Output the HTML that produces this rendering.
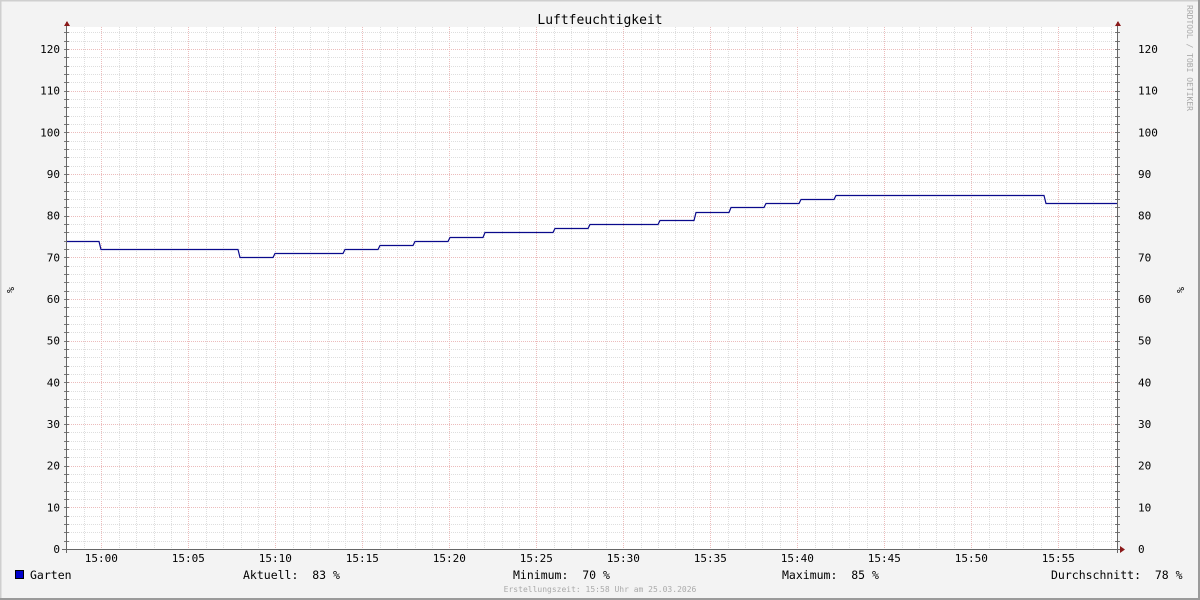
<!DOCTYPE html>
<html><head><meta charset="utf-8"><style>
html,body{margin:0;padding:0;background:#f3f3f3}
svg{display:block}
text{font-family:"DejaVu Sans Mono","Liberation Mono",monospace}
</style></head><body>
<svg id="g" width="1200" height="600" xmlns="http://www.w3.org/2000/svg">
<rect x="0" y="0" width="1200" height="600" fill="#f3f3f3"/>
<path d="M0 0.5H1200M0.5 0V600" stroke="#cfcfcf" stroke-width="2"/>
<path d="M0 599H1200M1199 0V600" stroke="#9a9a9a" stroke-width="2"/>
<rect x="67" y="27" width="1050" height="522" fill="#fff"/>
<g id="grid"></g>
<text x="600" y="24" font-size="13" text-anchor="middle" fill="#000">Luftfeuchtigkeit</text>
<g id="lbl" font-size="11" fill="#000"></g>
<path id="data" fill="none" stroke="#0a0a8c" stroke-width="1.2"/>
<path d="M66.5 22V553M1117.5 22V553M62 549.5H1124" stroke="#666" stroke-width="1"/>
<path d="M64 26L67 21L70 26Z M1115 26L1118 21L1121 26Z M1120 546L1125 549.5L1120 553Z" fill="#8b1a1a"/>
<text transform="translate(7,287) rotate(90)" font-size="10" fill="#000">%</text>
<text transform="translate(1177,287) rotate(90)" font-size="10" fill="#000">%</text>
<text transform="translate(1187,5) rotate(90)" font-size="8" fill="#aaa">RRDTOOL / TOBI OETIKER</text>
<rect x="15.5" y="570.5" width="8" height="8" fill="#0000cc" stroke="#000"/>
<g font-size="11.5" fill="#000">
<text x="30" y="579" xml:space="preserve">Garten</text>
<text x="243" y="579" xml:space="preserve">Aktuell:  83 %</text>
<text x="513" y="579" xml:space="preserve">Minimum:  70 %</text>
<text x="782" y="579" xml:space="preserve">Maximum:  85 %</text>
<text x="1051" y="579" xml:space="preserve">Durchschnitt:  78 %</text>
</g>
<text x="600" y="592" font-size="8" fill="#aaa" text-anchor="middle">Erstellungszeit: 15:58 Uhr am 25.03.2026</text>
</svg>
<script>
var NS="http://www.w3.org/2000/svg";
function X(t){return 101.3+t*17.4;}
function Y(v){return 549-v*520/124.8;}
var g=document.getElementById('grid'),l=document.getElementById('lbl');
function line(x1,y1,x2,y2,c,d){var e=document.createElementNS(NS,'line');e.setAttribute('x1',x1);e.setAttribute('y1',y1);e.setAttribute('x2',x2);e.setAttribute('y2',y2);e.setAttribute('stroke',c);if(d)e.setAttribute('stroke-dasharray','1,1');g.appendChild(e);}
function txt(x,y,s,a){var e=document.createElementNS(NS,'text');e.setAttribute('x',x);e.setAttribute('y',y);if(a)e.setAttribute('text-anchor',a);e.textContent=s;l.appendChild(e);}
for(var t=-1;t<=58;t++){var x=Math.round(X(t))+0.5;var maj=(t%5==0);line(x,27,x,549,maj?'#ecbcbc':'#dedede',1);
 if(maj){var m=t;txt(X(t),562,'15:'+(m<10?'0':'')+m,'middle');}}
for(var v=2;v<=124;v+=2){var y=Math.round(Y(v))+0.5;var maj=(v%10==0);line(67,y,1117,y,maj?'#ecbcbc':'#dedede',1);
 line(64,y,69,y,'#777',0);line(1115,y,1120,y,'#777',0);
 if(maj){txt(60,Y(v)+4,String(v),'end');txt(1138,Y(v)+4,String(v));}}
txt(60,553,'0','end');txt(1138,553,'0');
var st=[[101,72],[240,70],[275,71],[345,72],[380,73],[415,74],[450,75],[485,76],[555,77],[590,78],[660,79],[696,81],[731,82],[766,83],[801,84],[836,85],[1046,83]];
var d='M67 '+(Math.round(Y(74))+0.5);
for(var i=0;i<st.length;i++){d+=' L'+(st[i][0]-2)+' '+(Math.round(Y(i?st[i-1][1]:74))+0.5)+' L'+st[i][0]+' '+(Math.round(Y(st[i][1]))+0.5);}
d+=' L1117 '+(Math.round(Y(83))+0.5);
document.getElementById('data').setAttribute('d',d);
</script>
</body></html>
